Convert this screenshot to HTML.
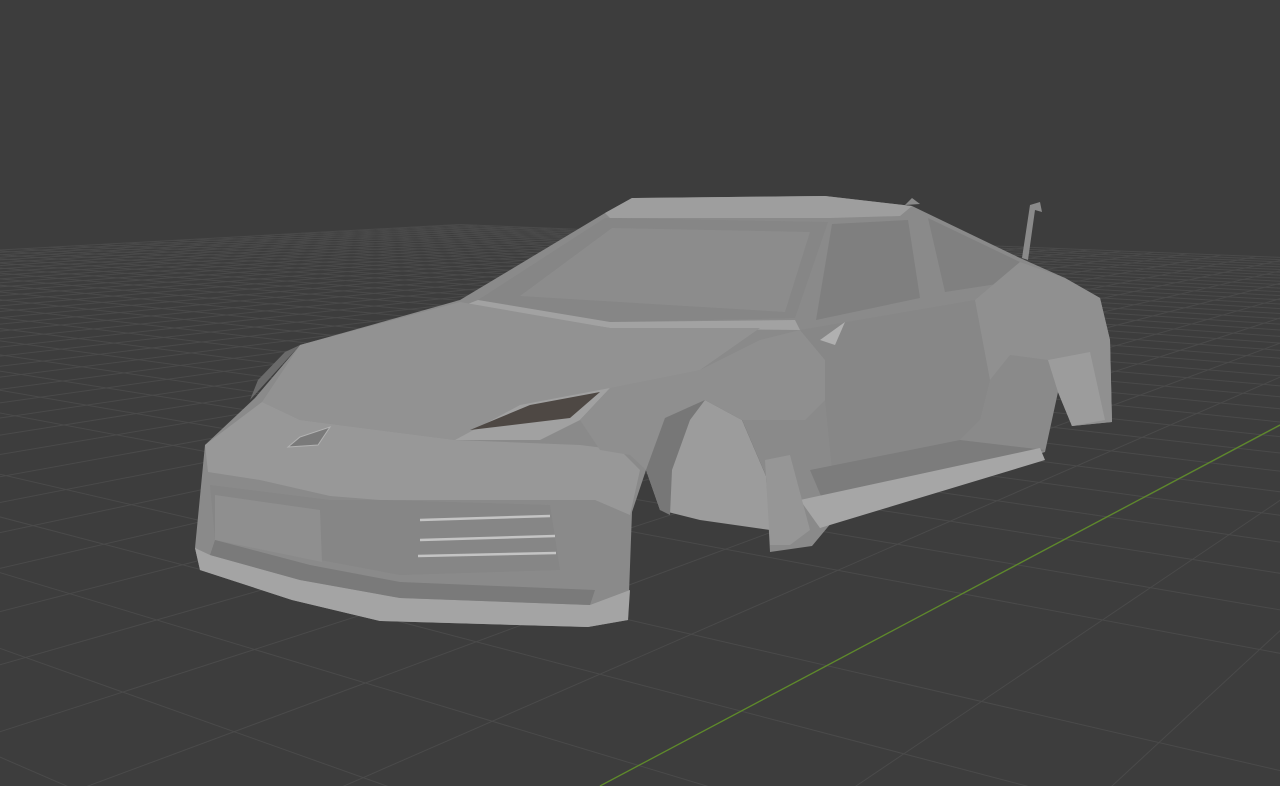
<!DOCTYPE html>
<html><head><meta charset="utf-8"><style>
html,body{margin:0;padding:0;background:#3d3d3d;width:1280px;height:786px;overflow:hidden}
svg{display:block;position:absolute;left:0;top:0}
</style></head><body>
<svg id="s" width="1280" height="786" viewBox="0 0 1280 786" xmlns="http://www.w3.org/2000/svg">
<rect width="1280" height="786" fill="#3d3d3d"/>
<g id="grid" stroke="#4a4a4a" stroke-width="1" fill="none"></g>
<line x1="600" y1="786" x2="1280" y2="425" stroke="#5e8a2a" stroke-width="1.3"/>
<g stroke="none">
<path d="M195,548 L205,445 L255,398 L300,345 L460,300 L605,213 L632,198 L825,196 L912,206 L1020,258 L1065,278 L1100,298 L1110,340 L1112,422 L1072,426 L1058,392 L1045,452 L832,522 L812,546 L770,552 L766,476 L742,420 L705,400 L665,418 L646,470 L632,512 L628,620 L588,627 L380,621 L292,600 L200,570 Z" fill="#8a8a8a"/>
<path d="M605,213 L632,198 L825,196 L912,206 L900,216 L830,218 L610,218 Z" fill="#9e9e9e"/>
<path d="M478,300 L605,218 L828,222 L795,318 L610,322 Z" fill="#868686"/>
<path d="M520,296 L612,228 L810,232 L785,312 Z" fill="#8c8c8c"/>
<path d="M478,300 L610,322 L795,320 L800,330 L610,328 L465,305 Z" fill="#a2a2a2"/>
<path d="M832,224 L908,220 L920,298 L816,320 Z" fill="#7f7f7f"/>
<path d="M928,218 L1020,262 L1010,282 L945,292 Z" fill="#808080"/>
<path d="M300,345 L460,302 L610,328 L760,328 L700,370 L610,392 L500,420 L455,440 L300,420 L262,402 Z" fill="#929292"/>
<path d="M205,445 L262,402 L300,420 L455,440 L580,445 L620,450 L640,470 L630,515 L595,500 L540,500 L380,500 L330,496 L260,480 L208,472 Z" fill="#989898"/>
<path d="M210,485 L330,500 L380,500 L550,505 L560,570 L400,575 L320,560 L215,540 Z" fill="#868686"/>
<path d="M215,495 L320,510 L322,562 L215,540 Z" fill="#8f8f8f"/>
<path d="M420,540 L555,536 M418,556 L556,553 M420,520 L550,516" stroke="#c4c4c4" stroke-width="2.5"/>
<path d="M195,548 L200,570 L292,600 L380,621 L588,627 L628,620 L630,590 L590,605 L400,598 L300,580 L210,555 Z" fill="#a4a4a4"/>
<path d="M210,555 L300,580 L400,598 L590,605 L595,590 L400,582 L310,565 L215,540 Z" fill="#7a7a7a"/>
<path d="M455,440 L520,405 L610,388 L580,420 L540,440 Z" fill="#a1a1a1"/>
<path d="M470,430 L530,405 L600,392 L570,418 Z" fill="#4e4844"/>
<path d="M250,400 L300,345 L285,352 L258,380 Z" fill="#6a6a6a"/>
<path d="M300,437 L330,427 L318,445 L288,447 Z" fill="#7a7a7a" stroke="#b2b2b2"/>
<path d="M580,420 L610,388 L700,370 L760,340 L800,330 L825,360 L825,400 L805,420 L742,420 L705,400 L665,418 L646,470 L630,455 L600,450 Z" fill="#8f8f8f"/>
<path d="M646,470 L665,418 L705,400 L742,420 L766,476 L770,530 L700,520 L660,510 Z" fill="#9c9c9c"/>
<path d="M646,470 L665,418 L705,400 L690,420 L672,470 L670,515 L660,510 Z" fill="#777"/>
<path d="M800,330 L975,300 L990,380 L980,420 L960,440 L832,470 L825,400 L825,360 Z" fill="#878787"/>
<path d="M820,340 L845,322 L835,345 Z" fill="#b0b0b0"/>
<path d="M810,470 L960,440 L1045,450 L832,522 Z" fill="#7c7c7c"/>
<path d="M800,500 L1040,448 L1045,460 L820,528 Z" fill="#a6a6a6"/>
<path d="M765,460 L790,455 L810,530 L790,545 L770,545 Z" fill="#969696"/>
<path d="M975,300 L1020,262 L1065,278 L1100,298 L1110,340 L1112,422 L1072,426 L1058,392 L1048,360 L1010,355 L990,380 Z" fill="#909090"/>
<path d="M1048,360 L1090,352 L1105,420 L1072,426 L1058,392 Z" fill="#9c9c9c"/>
<path d="M1022,258 L1030,205 L1040,202 L1042,212 L1035,210 L1028,260 Z" fill="#8a8a8a"/>
<path d="M905,205 L912,198 L920,204 Z" fill="#8a8a8a"/>
</g>
</svg>
<script>
(function(){
var g=document.getElementById('grid');
var v1=[1800,150],v2=[-1400,150],o=[900,627];
var a=0.075,b=0.06;
function P(X,Y){var w=1+a*X+b*Y;return [(v1[0]*a*X+v2[0]*b*Y+o[0])/w,(v1[1]*a*X+v2[1]*b*Y+o[1])/w,w];}
var out='';
function seg(f){var pts=[];for(var t=-40;t<=40;t+=0.25){var p=f(t);if(p[2]>0.3){pts.push(p);}}
 if(pts.length<2)return;var p0=pts[0],p1=pts[pts.length-1];
 out+='<line x1="'+p0[0].toFixed(1)+'" y1="'+p0[1].toFixed(1)+'" x2="'+p1[0].toFixed(1)+'" y2="'+p1[1].toFixed(1)+'"/>';}
for(var i=-40;i<=40;i++){
 (function(i){seg(function(t){return P(t,i);});if(i!==0)seg(function(t){return P(i,t);});})(i);
}
g.innerHTML=out;
})();
</script>
</body></html>
